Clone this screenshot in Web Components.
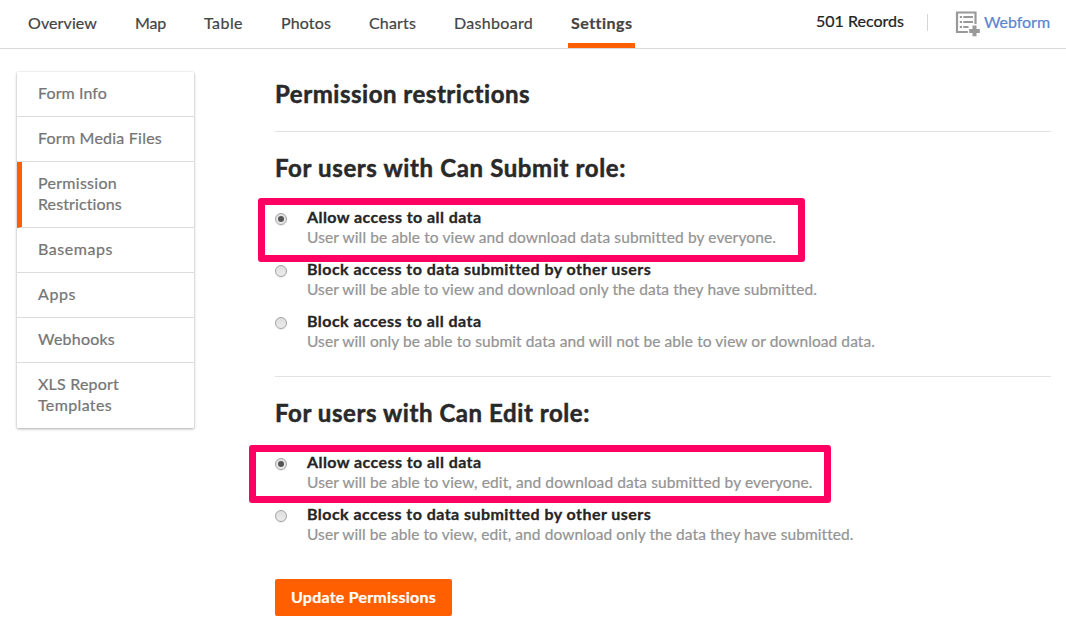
<!DOCTYPE html>
<html lang="en">
<head>
<meta charset="utf-8">
<title>Settings</title>
<style>
html,body{margin:0;height:100%;overflow:hidden;background:#fff}
body{font-family:Lato,"Liberation Sans",sans-serif;font-size:16px;-webkit-text-stroke:.22px}
</style>
</head>
<body>
<settings-page></settings-page>
<script>
const define=(name,html,setup)=>customElements.define(name,class extends HTMLElement{
  connectedCallback(){
    if(this.shadowRoot)return;
    const t=document.createElement('template');t.innerHTML=html;
    this.attachShadow({mode:'open'}).append(t.content.cloneNode(true));
    if(setup)setup.call(this,this.shadowRoot);
  }
});

/* A single line of text, tracked so that it fills the given width. */
define('fit-text',`<style>:host{display:inline-block;white-space:nowrap}span{display:inline-block}</style><span><slot></slot></span>`,function(root){
  const w=+this.getAttribute('w'),span=root.querySelector('span');
  const n=this.textContent.length;
  const natural=span.getBoundingClientRect().width;
  span.style.letterSpacing=((w-natural)/n)+'px';
  this.style.width=w+'px';
});

define('nav-tab',`<style>
:host{display:block;box-sizing:border-box;height:48px;padding:0 3px;line-height:45px;color:#444;border-bottom:5px solid transparent}
:host([active]){font-weight:700;border-bottom-color:#ff5f00}
</style><slot></slot>`);

define('form-icon',`<style>:host{display:block;width:25px;height:26px}svg{display:block}</style>
<svg width="25" height="26" viewBox="0 0 25 26" fill="none" stroke="#999">
<path d="M12.8 21H2V1.5H20.5V13" stroke-width="2.2"/>
<path d="M4.8 6h2.2M8.3 6h9.7M4.8 11h2.2M8.3 11h9.7M4.8 16h2.2M8.3 16h5.2" stroke-width="2"/>
<path d="M19.5 14.5v10.8M14.2 19.9h10.6" stroke-width="4"/>
</svg>`);

define('top-bar',`<style>
:host{display:flex;box-sizing:border-box;height:49px;padding:0 16px 0 25px;border-bottom:1px solid #d9d9d9;justify-content:space-between}
nav{display:flex;gap:32px}
aside{display:flex;align-items:flex-start}
.rec{color:#222;line-height:41px}
i{width:1px;height:17px;background:#d5d5d5;margin:14px 27px 0 23px}
form-icon{margin:11px 4px 0 0}
.web{color:#5b86cf;line-height:43px}
</style>
<nav>
<nav-tab><fit-text w="69">Overview</fit-text></nav-tab>
<nav-tab><fit-text w="31">Map</fit-text></nav-tab>
<nav-tab><fit-text w="39">Table</fit-text></nav-tab>
<nav-tab><fit-text w="50">Photos</fit-text></nav-tab>
<nav-tab><fit-text w="47">Charts</fit-text></nav-tab>
<nav-tab><fit-text w="79">Dashboard</fit-text></nav-tab>
<nav-tab active><fit-text w="61">Settings</fit-text></nav-tab>
</nav>
<aside><fit-text class="rec" w="88">501 Records</fit-text><i></i><form-icon></form-icon><fit-text class="web" w="66">Webform</fit-text></aside>`);

define('side-item',`<style>
:host{display:block;box-sizing:border-box;padding:10px 21px 13px;line-height:21px;border-bottom:1px solid #dcdcdc;color:#757575}
:host(:last-child){border-bottom:0}
:host([active]){border-left:5px solid #ff5f00;padding-left:16px}
::slotted(fit-text){vertical-align:top}
</style><slot></slot>`);

define('side-menu',`<style>
:host{display:block;width:177px;background:#fff;border-radius:1px;box-shadow:0 1px 3px rgba(0,0,0,.32),0 0 1px rgba(0,0,0,.2)}
</style>
<side-item><fit-text w="69">Form Info</fit-text></side-item>
<side-item><fit-text w="124">Form Media Files</fit-text></side-item>
<side-item active><fit-text w="79">Permission</fit-text><br><fit-text w="84">Restrictions</fit-text></side-item>
<side-item><fit-text w="75">Basemaps</fit-text></side-item>
<side-item><fit-text w="38">Apps</fit-text></side-item>
<side-item><fit-text w="77">Webhooks</fit-text></side-item>
<side-item><fit-text w="81">XLS Report</fit-text><br><fit-text w="74">Templates</fit-text></side-item>`);

define('section-title',`<style>
:host{display:block;font-size:24px;font-weight:700;line-height:30px;color:#292929;-webkit-text-stroke:.5px}
::slotted(fit-text){vertical-align:top}
</style><slot></slot>`);

define('radio-option',`<style>
:host{display:flex;position:relative;height:52px;gap:20px}
b{box-sizing:border-box;width:12px;height:12px;margin-top:5px;border:1px solid #a3a3a3;border-radius:50%;background:linear-gradient(#dedede,#ececec);display:flex;align-items:center;justify-content:center;box-shadow:0 1px 1px rgba(0,0,0,.08)}
:host([checked]) b::after{content:"";width:6px;height:6px;border-radius:50%;background:#555}
.c{margin-top:-1px}
.t{height:20px;font-weight:700;line-height:20px;color:#252525;-webkit-text-stroke:.3px}
.d{height:20px;font-size:15.5px;line-height:20px;color:#949494}
::slotted(fit-text){vertical-align:top}
.mark{position:absolute;box-sizing:border-box;border:7px solid #ff0063;border-radius:3px;display:none}
:host([mark="submit"]) .mark{display:block;left:-17px;top:-10px;width:547px;height:64px}
:host([mark="edit"]) .mark{display:block;left:-26px;top:-8px;width:582px;height:58px}
</style><b></b><div class="c"><div class="t"><slot name="title"></slot></div><div class="d"><slot></slot></div></div><div class="mark"></div>`);

define('action-button',`<style>
:host{display:block;box-sizing:border-box;width:177px;height:37px;padding-left:16px;border-radius:2px;background:#ff5f00;color:#fff;font-weight:700;line-height:36px}
::slotted(fit-text){vertical-align:top}
</style><slot></slot>`);

define('settings-page',`<style>
:host{display:block}
.body{display:flex;align-items:flex-start;padding:23px 15px 0 17px;gap:81px}
main{flex:1}
hr{height:1px;border:0;margin:0;background:#e3e3e3}
.h1{margin:7px 0 22px}
.h2{margin:21px 0 25px}
.a{height:168px}.b{height:126px}
</style>
<top-bar></top-bar>
<div class="body">
<side-menu></side-menu>
<main>
<section-title class="h1"><fit-text w="255.5">Permission restrictions</fit-text></section-title>
<hr>
<section-title class="h2"><fit-text w="351">For users with Can Submit role:</fit-text></section-title>
<div class="a">
<radio-option checked mark="submit"><fit-text slot="title" w="174.5">Allow access to all data</fit-text><fit-text w="468.5">User will be able to view and download data submitted by everyone.</fit-text></radio-option>
<radio-option><fit-text slot="title" w="343.5">Block access to data submitted by other users</fit-text><fit-text w="509.5">User will be able to view and download only the data they have submitted.</fit-text></radio-option>
<radio-option><fit-text slot="title" w="174.5">Block access to all data</fit-text><fit-text w="568">User will only be able to submit data and will not be able to view or download data.</fit-text></radio-option>
</div>
<hr>
<section-title class="h2"><fit-text w="315">For users with Can Edit role:</fit-text></section-title>
<div class="b">
<radio-option checked mark="edit"><fit-text slot="title" w="174.5">Allow access to all data</fit-text><fit-text w="505">User will be able to view, edit, and download data submitted by everyone.</fit-text></radio-option>
<radio-option><fit-text slot="title" w="343.5">Block access to data submitted by other users</fit-text><fit-text w="546">User will be able to view, edit, and download only the data they have submitted.</fit-text></radio-option>
</div>
<action-button><fit-text w="145">Update Permissions</fit-text></action-button>
</main>
</div>`);
</script>
</body>
</html>
